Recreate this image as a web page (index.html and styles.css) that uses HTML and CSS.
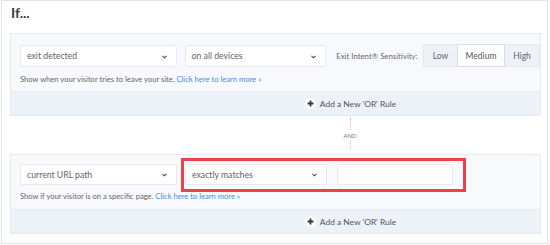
FILE: index.html
```html
<!DOCTYPE html>
<html>
<head>
<meta charset="utf-8">
<link rel="stylesheet" href="styles.css">
</head>
<body>
<div class="frame">
  <h2 class="heading">If...</h2>

  <div class="rule">
    <div class="rule-body">
      <div class="row">
        <div class="select sel-a">exit detected<svg class="chev" viewBox="0 0 6 4"><polyline points="0.6,0.6 3,3 5.4,0.6"/></svg></div>
        <div class="select sel-b">on all devices<svg class="chev" viewBox="0 0 6 4"><polyline points="0.6,0.6 3,3 5.4,0.6"/></svg></div>
        <span class="label">Exit Intent® Sensitivity:</span>
        <div class="btn-group">
          <span class="btn btn-low">Low</span>
          <span class="btn btn-med active">Medium</span>
          <span class="btn btn-high">High</span>
        </div>
      </div>
      <p class="help">Show when your visitor tries to leave your site. <a class="link">Click here to learn more »</a></p>
    </div>
    <div class="rule-foot"><span class="plus"><svg viewBox="0 0 10 10"><path d="M5 2.3v5.4M2.3 5h5.4"/></svg></span>Add a New 'OR' Rule</div>
  </div>

  <div class="connector"><span class="and">AND</span></div>

  <div class="rule rule-2">
    <div class="rule-body body-2">
      <div class="row row-2">
        <div class="select sel-a">current URL path<svg class="chev" viewBox="0 0 6 4"><polyline points="0.6,0.6 3,3 5.4,0.6"/></svg></div>
        <div class="select sel-b">exactly matches<svg class="chev" viewBox="0 0 6 4"><polyline points="0.6,0.6 3,3 5.4,0.6"/></svg></div>
        <div class="input"></div>
      </div>
      <p class="help help-2">Show if your visitor is on a specific page. <a class="link">Click here to learn more »</a></p>
    </div>
    <div class="rule-foot"><span class="plus"><svg viewBox="0 0 10 10"><path d="M5 2.3v5.4M2.3 5h5.4"/></svg></span>Add a New 'OR' Rule</div>
    <div class="highlight"></div>
  </div>
</div>
</body>
</html>
```

FILE: styles.css
```css
* { box-sizing: border-box; }
html, body { margin: 0; padding: 0; background: #ffffff; }
body { font-family: Lato, "Open Sans", sans-serif; color: #555; }

.frame {
  margin-left: 1px;
  width: 547px;
  height: 244px;
  border: 1px solid #e2e4e8;
  padding: 0 0 0 8px;
}

.heading {
  margin: 5px 0 13px 1px;
  font-size: 14px;
  line-height: 14px;
  height: 14px;
  font-weight: 700;
  color: #3a3d42;
}

.rule {
  position: relative;
  width: 531px;
  border: 1px solid #e6eaf1;
  background: #f8f9fd;
}

.rule-body {
  padding: 10px 0 7px 9px;
}
.body-2 { padding: 8px 0 8px 9px; }

.row {
  display: flex;
  align-items: center;
  height: 23px;
}
.row-2 { height: 22px; }

.select {
  position: relative;
  height: 22px;
  line-height: 20px;
  background: #fff;
  border: 1px solid #e6e9ef;
  border-radius: 2px;
  padding-left: 6px;
  font-size: 8.7px;
  color: #5f6368;
}
.row-2 .select { height: 21px; line-height: 19px; }
.sel-a { width: 157px; margin-right: 8px; }
.sel-b { width: 142px; margin-right: 10px; }

.chev {
  position: absolute;
  right: 9px;
  top: 9px;
  width: 5px;
  height: 4px;
  fill: none;
  stroke: #444;
  stroke-width: 1.3;
}
.row-2 .chev { top: 8px; }

.label {
  font-size: 7.8px;
  color: #666;
  width: 87px;
}

.btn-group {
  display: flex;
  height: 23px;
  border: 1px solid #e3e7ee;
  border-radius: 2px;
  background: #eef1f7;
}
.btn {
  display: flex;
  align-items: center;
  justify-content: center;
  font-size: 8.5px;
  color: #666;
}
.btn-low { width: 33px; }
.btn-med { width: 48px; }
.btn-high { width: 34px; }
.btn.active {
  background: #fff;
  border: 1px solid #d8dce4;
  margin: -1px 0;
  color: #555;
}

.help {
  margin: 7px 0 0;
  font-size: 7.6px;
  line-height: 10px;
  color: #666;
}
.help-2 { margin-top: 6px; }
.link { color: #3f8ddb; }

.rule-foot {
  height: 24px;
  background: #edf1f8;
  border-top: 1px solid #e8ecf3;
  display: flex;
  align-items: center;
  justify-content: center;
  padding-left: 150px;
  font-size: 8.4px;
  color: #555;
}
.plus {
  width: 11px;
  height: 11px;
  border-radius: 50%;
  background: #fff;
  margin-right: 4px;
  display: flex;
}
.plus svg {
  width: 11px;
  height: 11px;
  fill: none;
  stroke: #333;
  stroke-width: 1.6;
}

.connector {
  position: relative;
  height: 38px;
  width: 531px;
  display: flex;
  align-items: center;
  justify-content: center;
  padding-left: 149px;
}
.connector::before {
  content: "";
  position: absolute;
  left: 340px;
  top: 2px;
  bottom: 6px;
  border-left: 1px dotted #b8bcc4;
}
.and {
  position: relative;
  font-size: 6px;
  color: #777;
  background: #fff;
  padding: 2px 0;
  line-height: 7px;
}

.input {
  width: 116px;
  height: 21px;
  background: #fff;
  border: 1px solid #e6e9ef;
  border-radius: 2px;
}

.highlight {
  position: absolute;
  left: 170px;
  top: 3px;
  width: 285px;
  height: 34px;
  border: 3px solid #ef3f48;
}
```
